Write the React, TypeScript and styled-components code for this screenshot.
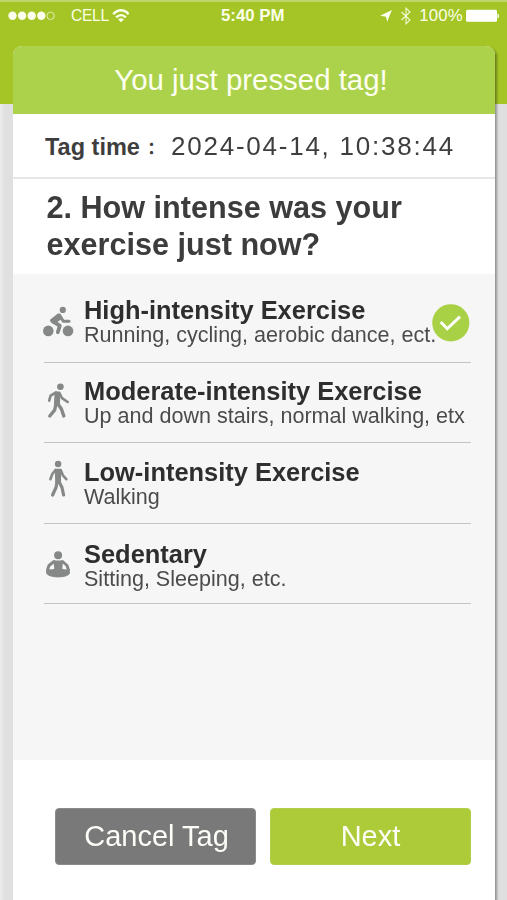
import React from "react";
import styled, { createGlobalStyle } from "styled-components";

const GlobalStyle = createGlobalStyle`
  * { box-sizing: border-box; }
  body {
    margin: 0;
    background: #e0e0e0;
    font-family: "Liberation Sans", Arial, sans-serif;
  }
`;

const Screen = styled.div`
  width: 507px;
  height: 900px;
  overflow: hidden;
  display: flex;
  flex-direction: column;
  background: linear-gradient(#a4c525 0 104px, transparent 104px),
    linear-gradient(90deg, #ececec 0, #e0e0e0 5px, #dfdfdf 100%);
  box-shadow: inset 0 2px 0 #bdd56a;
`;

const StatusBar = styled.header`
  height: 46px;
  padding: 6px 7px 0 8px;
  display: grid;
  grid-template-columns: 213px 1fr auto;
  align-items: start;
  color: #fbffe9;
  line-height: 20px;
  white-space: nowrap;
`;

const StatusGroup = styled.div`
  display: flex;
  align-items: center;
  height: 20px;
`;

const Signal = styled.svg`
  width: 48px;
  height: 12px;
  margin-right: 15px;
`;

const Carrier = styled.span`
  font-size: 15.6px;
  letter-spacing: -0.3px;
`;

const Clock = styled.strong`
  font-size: 16.8px;
`;

const Percent = styled.span`
  font-size: 16.8px;
  letter-spacing: 0.2px;
  margin-right: 3px;
`;

const Glyph = styled.svg<{ $gap?: number }>`
  display: block;
  flex: none;
  margin-right: ${(p) => p.$gap ?? 0}px;
`;

const CardShadow = styled.div`
  flex: 1;
  display: flex;
  filter: drop-shadow(2px 2px 1px rgba(0, 0, 0, 0.34));
`;

const Card = styled.main`
  flex: none;
  width: 482px;
  margin-left: 13px;
  display: flex;
  flex-direction: column;
  background: #fff;
  border-radius: 9px 9px 0 0;
  overflow: hidden;
`;

const CardTitle = styled.h1`
  margin: 0;
  height: 68px;
  padding-right: 6px;
  background: #acd24c;
  color: #fdfff0;
  font-size: 29.4px;
  font-weight: 400;
  line-height: 68px;
  text-align: center;
`;

const TagTime = styled.div`
  height: 65px;
  padding-left: 32px;
  display: flex;
  border-bottom: 2px solid #e6e6e6;
  color: #3e3e3e;
  line-height: 64px;
  white-space: nowrap;
`;

const TagLabel = styled.strong`
  width: 126px;
  height: 62px;
  overflow: hidden;
  font-size: 23.5px;
  line-height: 66px;
`;

const Colon = styled.span`
  margin-left: 3px;
  font-family: "Noto Sans CJK TC", sans-serif;
  font-size: 17px;
  line-height: 1;
`;

const TagValue = styled.time`
  font-size: 26px;
  letter-spacing: 1.76px;
`;

const Question = styled.h2`
  margin: 0;
  height: 95px;
  padding: 10px 0 0 33.5px;
  color: #3c3c3c;
  font-size: 30.6px;
  line-height: 37px;
`;

const Options = styled.ul`
  margin: 0;
  height: 486px;
  padding: 8px 24px 0 31px;
  list-style: none;
  background: #f6f6f6;
`;

const Option = styled.li`
  position: relative;
  height: 80.6px;
  display: grid;
  grid-template-columns: 40px 1fr;
  border-bottom: 1.6px solid #c4c4c4;
  white-space: nowrap;
`;

const OptionIcon = styled.svg`
  width: 32px;
  height: 36px;
  margin: 22px 0 0 -2px;
  overflow: visible;
  fill: #858887;
  stroke: #858887;
  stroke-linecap: round;
  stroke-linejoin: round;
`;

const OptionText = styled.div<{ $inset: number }>`
  padding-top: ${(p) => p.$inset}px;
`;

const OptionTitle = styled.h3`
  margin: 0;
  color: #2e2e2e;
  font-size: 25.45px;
  line-height: 25px;
`;

const OptionNote = styled.p`
  margin: 0;
  color: #4b4b4b;
  font-size: 21.55px;
  line-height: 24px;
`;

const Check = styled.svg`
  position: absolute;
  right: 1px;
  top: 22px;
  width: 38px;
  height: 38px;
`;

const Actions = styled.footer`
  padding: 48px 24px 0 42px;
  display: flex;
  gap: 14px;
`;

const Button = styled.button<{ $primary?: boolean }>`
  flex: 1;
  height: 57px;
  padding: 0 0 1px;
  border: 1px solid ${(p) => (p.$primary ? "#b2cf4c" : "#8b8b8b")};
  border-radius: 4px;
  background: ${(p) => (p.$primary ? "#adcb38" : "#797979")};
  color: #fdfdf8;
  font: 29px "Liberation Sans", Arial, sans-serif;
  text-indent: ${(p) => (p.$primary ? 0 : 2)}px;
`;

const options = [
  {
    title: "High-intensity Exercise",
    note: "Running, cycling, aerobic dance, ect.",
    inset: 16,
    selected: true,
    icon: (
      <>
        <circle cx="6.3" cy="26.9" r="5.3" stroke="none" />
        <circle cx="26" cy="26.9" r="5.3" stroke="none" />
        <circle cx="20.8" cy="5.9" r="3.1" stroke="none" />
        <path d="M16.5 11 9.5 16.5 12 18.5 18.5 14Z" strokeWidth="3" />
        <path d="M17.5 11 21.3 17.3H27" fill="none" strokeWidth="3" />
        <path d="M11 17.5 17.8 21.6 15.8 28.2" fill="none" strokeWidth="3.8" />
      </>
    ),
  },
  {
    title: "Moderate-intensity Exercise",
    note: "Up and down stairs, normal walking, etx",
    inset: 16.4,
    icon: (
      <>
        <circle cx="18.4" cy="1.8" r="3.3" stroke="none" />
        <path d="M13.8 7.8 17 7.8 16.8 18H13.2Z" strokeWidth="2.4" />
        <path d="M14 7.5 8.6 10.6 7.2 15.6M17.5 8 20 13.2 25.7 17" fill="none" strokeWidth="2.6" />
        <path d="M14.2 17.5 12.7 25 7.8 31M15.2 18 19.3 23.7 21.8 31" fill="none" strokeWidth="3.4" />
      </>
    ),
  },
  {
    title: "Low-intensity Exercise",
    note: "Walking",
    inset: 17,
    icon: (
      <>
        <circle cx="16.1" cy="-1" r="3.2" stroke="none" />
        <path d="M14 5H18L17.8 17H14.4Z" strokeWidth="2.4" />
        <path d="M13.5 5 10.3 9 8.4 14.2M18.7 5 21 10.5 24.3 14.2" fill="none" strokeWidth="2.6" />
        <path d="M15 17 14 22.5 10.6 30M17.2 17 20 22.5 21.6 30" fill="none" strokeWidth="3.2" />
      </>
    ),
  },
  {
    title: "Sedentary",
    note: "Sitting, Sleeping, etc.",
    inset: 18,
    icon: (
      <g transform="translate(0 2)">
        <circle cx="16.1" cy="7.2" r="4" stroke="none" />
        <path d="M12.5 13.5H20L19 23H13.5Z" strokeWidth="2" />
        <path d="M12 13.5 7 17.5 5.5 22 11 24M20.5 13.5 25 17.5 26.5 22 21.5 24" fill="none" strokeWidth="3" />
        <path d="M5 23 14 21H19L27 23C29 26 25.5 28.7 16.1 28.9 7 28.7 3 26 5 23Z" strokeWidth="1" />
      </g>
    ),
  },
];

export default function App() {
  return (
    <Screen>
      <GlobalStyle />
      <StatusBar>
        <StatusGroup>
          <Signal viewBox="0 0 48 12" fill="#fcffed">
            {[4.5, 14.1, 23.7, 33.3].map((x) => (
              <circle key={x} cx={x} cy="5.8" r="4.2" />
            ))}
            <circle cx="42.6" cy="5.8" r="3.7" fill="none" stroke="#e3eeb5" />
          </Signal>
          <Carrier>CELL</Carrier>
          <Glyph width="20" height="16" viewBox="0 0 20 16" fill="none" stroke="#fcffed">
            <path d="M4.3 6.3C8.5.9 15.5.9 19.7 6.3" strokeWidth="2.5" />
            <path d="M7.2 9.4C10 6.3 14 6.3 16.8 9.4" strokeWidth="2.4" />
            <path d="M9.1 11.4C11 9.8 13 9.8 14.9 11.4L12 14.3Z" fill="#fcffed" stroke="none" />
          </Glyph>
        </StatusGroup>
        <Clock>5:40 PM</Clock>
        <StatusGroup>
          <Glyph $gap={8} width="12" height="12" viewBox="0 0 12 12" fill="#fcffed">
            <path d="M11.9.1 7.2 11.8 6 6.7.1 5.8Z" />
          </Glyph>
          <Glyph $gap={7} width="12" height="18" viewBox="0 0 12 18" fill="none" stroke="#f5fad8" strokeWidth="1.1">
            <path d="M1.5 5 10 13 6 16.8V1.2L10 5 1.5 13" />
          </Glyph>
          <Percent>100%</Percent>
          <Glyph width="34" height="14" viewBox="0 0 34 14" fill="#fff">
            <rect x="0" y=".8" width="31" height="12" rx="1.5" />
            <path d="M31.5 4.5Q33 4.8 33 7T31.5 9.5Z" />
          </Glyph>
        </StatusGroup>
      </StatusBar>
      <CardShadow>
        <Card>
          <CardTitle>You just pressed tag!</CardTitle>
          <TagTime>
            <TagLabel>
              Tag time<Colon>：</Colon>
            </TagLabel>
            <TagValue>2024-04-14, 10:38:44</TagValue>
          </TagTime>
          <Question>
            2. How intense was your
            <br />
            exercise just now?
          </Question>
          <Options>
            {options.map((o) => (
              <Option key={o.title}>
                <OptionIcon viewBox="0 0 32 36">{o.icon}</OptionIcon>
                <OptionText $inset={o.inset}>
                  <OptionTitle>{o.title}</OptionTitle>
                  <OptionNote>{o.note}</OptionNote>
                </OptionText>
                {o.selected && (
                  <Check viewBox="0 0 38 38">
                    <circle cx="18.8" cy="18.8" r="18.6" fill="#a9d146" />
                    <path d="M8.8 18 15.2 24.8 28 12.6" fill="none" stroke="#fff" strokeWidth="2.9" />
                  </Check>
                )}
              </Option>
            ))}
          </Options>
          <Actions>
            <Button>Cancel Tag</Button>
            <Button $primary>Next</Button>
          </Actions>
        </Card>
      </CardShadow>
    </Screen>
  );
}
